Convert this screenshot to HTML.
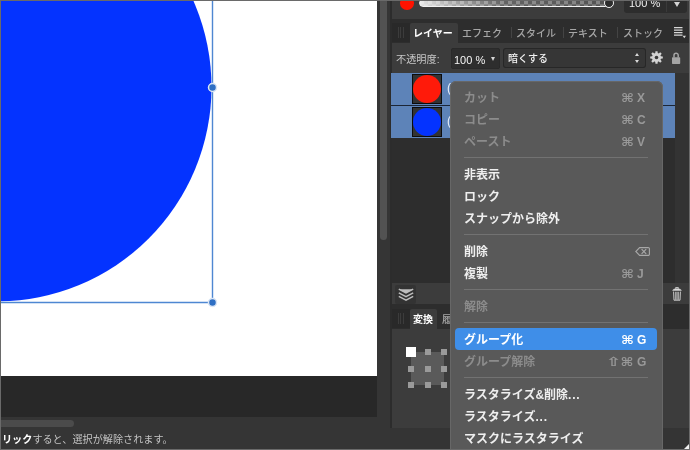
<!DOCTYPE html>
<html lang="ja"><head><meta charset="utf-8">
<style>
*{box-sizing:border-box;margin:0;padding:0}
html,body{width:690px;height:450px;overflow:hidden;background:#383838}
body{position:relative;font-family:"Liberation Sans","Noto Sans CJK JP",sans-serif;font-size:12px;color:#e6e6e6}
.abs{position:absolute}
#root{position:absolute;left:0;top:0;width:690px;height:450px;overflow:hidden}
#root div,#status span{will-change:transform}
#canvas{left:0;top:0;width:377px;height:376px;background:#fff;overflow:hidden}
#below{left:0;top:376px;width:377px;height:41px;background:#282828}
#hscroll{left:0;top:417px;width:390px;height:11px;background:#353535}
#hthumb{left:-6px;top:420px;width:80px;height:7px;border-radius:3.5px;background:#4b4b4b}
#status{left:0;top:428px;width:390px;height:22px;background:#353535}
#status span{position:absolute;left:2px;top:3.6px;font-size:10.15px;color:#c4c4c4;white-space:nowrap;line-height:16px}
#status b{color:#fff;font-weight:700}
#vtrack{left:377px;top:0;width:13px;height:428px;background:#353535}
#vthumb{left:380px;top:-6px;width:7px;height:246px;border-radius:3.5px;background:#525252}
#panel{left:390px;top:0;width:300px;height:450px;background:#383838}
.menu{left:450px;top:81px;width:212.6px;height:380px;background:#595959;border-radius:6px;box-shadow:0 0 0 1px #676767 inset}
.mi{position:absolute;left:14px;margin-top:1px;font-size:12px;font-weight:700;color:#efefef;line-height:22px;height:22px;white-space:nowrap}
.mi.dis{color:#8c8c8c;font-weight:700}
.mi.on,.sc.on{color:#fff}
.sc{position:absolute;margin-top:1px;font-size:12px;font-weight:700;color:#999;line-height:22px;height:22px;white-space:nowrap;font-family:"Liberation Sans","DejaVu Sans",sans-serif}
.sc.mod{right:29px;text-align:right;font-size:14px;margin-top:1px}
.sc.mod b,.sc.mod i{display:inline-block;font-style:normal;transform:scale(1,.85)}
.sc.mod i{font-size:15px;margin-right:1px;font-weight:700;transform:scale(1.25,.85)}
.sc.key{left:187px}
.sep{position:absolute;left:14px;width:184px;height:1px;background:#727272}
.hl{position:absolute;left:5px;width:202px;height:22px;border-radius:4px;background:#3f8ee8}
.del{position:absolute;left:184.5px}
.slider{border-radius:4px;border:1.2px solid #f2f2f2;background:linear-gradient(90deg,rgba(255,255,255,.85) 0%,rgba(255,255,255,.5) 18%,rgba(255,255,255,.1) 45%,rgba(255,255,255,0) 100%),repeating-conic-gradient(#525252 0 25%,#828282 0 50%) 0px .4px/8px 8px}
.tab{top:26px;font-size:10px;line-height:16px;color:#a6a6a6;font-weight:500;white-space:nowrap}
.tab.on{color:#fff;font-weight:700}
.tsep{top:27px;width:1px;height:11px;background:#444}
.box{background:#2e2e2e;border-radius:3px;box-shadow:0 0 0 .5px #262626 inset}
.thumb{width:30px;height:30px;background:#333;border:1px solid #0c0c0c}
.thumb i{position:absolute;left:0;top:0;width:28px;height:28px;border-radius:50%}
.dot{width:6px;height:6px;background:#9a9a9a}
.el{letter-spacing:.8px}
.box2{background:#363636;box-shadow:0 0 0 1px #272727 inset}
</style></head><body><div id="root">
<div id="canvas" class="abs">
<svg width="377" height="377" style="position:absolute;left:0;top:0">
<circle cx="-2.8" cy="87" r="214.3" fill="#0433ff"/>
<line x1="212.5" y1="0" x2="212.5" y2="302" stroke="#4e87d2" stroke-width="1.4"/>
<line x1="0" y1="302.5" x2="212" y2="302.5" stroke="#4e87d2" stroke-width="1.4"/>
<circle cx="212.5" cy="87.5" r="4" fill="#2f6fc4" stroke="#dbe6f5" stroke-width="1.5"/>
<circle cx="212.5" cy="302.5" r="4" fill="#2f6fc4" stroke="#dbe6f5" stroke-width="1.5"/>
</svg>
</div>
<div id="below" class="abs"></div>
<div id="hscroll" class="abs"></div><div id="hthumb" class="abs"></div>
<div id="status" class="abs"><span><b>リック</b>すると、選択が解除されます。</span></div>
<div id="vtrack" class="abs"></div><div id="vthumb" class="abs"></div>
<div id="panel" class="abs">
<!-- colour panel remnant -->
<div class="abs" style="left:0;top:0;width:1.5px;height:450px;background:#2c2c2c"></div>
<div class="abs" style="left:1.5px;top:0;width:298.5px;height:19px;background:#3c3c3c"></div>
<div class="abs" style="left:9.5px;top:-4.5px;width:13.5px;height:13.5px;border-radius:50%;background:#ff1200"></div>
<div class="abs slider" style="left:29px;top:-0.8px;width:190px;height:7.6px"></div>
<div class="abs" style="left:214px;top:-1.8px;width:9.8px;height:9.8px;border-radius:50%;border:1.6px solid #fff;background:#2c2c2c"></div>
<div class="abs" style="left:234px;top:-8px;width:63px;height:20.5px;border-radius:3px;background:#2d2d2d"></div>
<div class="abs" style="left:276px;top:-8px;width:1px;height:20px;background:#3a3a3a"></div>
<div class="abs" style="left:238.5px;top:-4px;font-size:11px;line-height:14px;color:#f2f2f2;white-space:nowrap">100 %</div>
<div class="abs tri" style="left:283.7px;top:1.5px;border-top:5px solid #d4d4d4;border-left:3.3px solid transparent;border-right:3.3px solid transparent"></div>
<!-- tab bar -->
<div class="abs" style="left:1.5px;top:19px;width:298.5px;height:24px;background:#2d2d2d"></div>
<div class="abs grip" style="left:2px;top:23px;width:17.5px;height:19px;background:#292929"></div>
<div class="abs" style="left:7.5px;top:26.5px;width:1px;height:10.5px;background:#3c3c3c"></div>
<div class="abs" style="left:10.0px;top:26.5px;width:1px;height:10.5px;background:#3c3c3c"></div>
<div class="abs" style="left:12.5px;top:26.5px;width:1px;height:10.5px;background:#3c3c3c"></div>
<div class="abs" style="left:19.5px;top:22.5px;width:47.5px;height:21px;background:#3c3c3c;border-radius:2px 2px 0 0"></div>
<div class="abs tab on" style="left:22.5px">レイヤー</div>
<div class="abs tab" style="left:72px">エフェク</div>
<div class="abs tsep" style="left:120.5px"></div>
<div class="abs tab" style="left:126.3px">スタイル</div>
<div class="abs tsep" style="left:173px"></div>
<div class="abs tab" style="left:177.5px">テキスト</div>
<div class="abs tsep" style="left:227px"></div>
<div class="abs tab" style="left:232.5px">ストック</div>
<svg class="abs" style="left:284px;top:27px" width="12" height="12" viewBox="0 0 12 12"><path d="M0 .7h8.5M0 3.2h8.5M0 5.7h8.5M0 8.2h8.5" stroke="#d8d8d8" stroke-width="1.2"/><path d="M8.6 8.8h3.4l-1.7 2.4z" fill="#d8d8d8"/></svg>
<!-- opacity row -->
<div class="abs" style="left:1.5px;top:43px;width:298.5px;height:29.5px;background:#3c3c3c"></div>
<div class="abs" style="left:6px;top:52px;font-size:10.2px;line-height:16px;color:#c8c8c8;white-space:nowrap">不透明度:</div>
<div class="abs box" style="left:61px;top:48px;width:49px;height:20.5px"></div>
<div class="abs" style="left:64px;top:52px;font-size:11px;line-height:16px;color:#f4f4f4;white-space:nowrap">100 %</div>
<div class="abs" style="left:100.8px;top:57px;border-top:4.4px solid #d4d4d4;border-left:2.6px solid transparent;border-right:2.6px solid transparent"></div>
<div class="abs box box2" style="left:112.5px;top:48px;width:143px;height:20px"></div>
<div class="abs" style="left:117.5px;top:51.4px;font-size:10px;line-height:16px;color:#f4f4f4;font-weight:500;white-space:nowrap">暗くする</div>
<div class="abs" style="left:245px;top:52.5px;border-bottom:3.5px solid #d8d8d8;border-left:2.6px solid transparent;border-right:2.6px solid transparent"></div>
<div class="abs" style="left:245px;top:60px;border-top:3.5px solid #d8d8d8;border-left:2.6px solid transparent;border-right:2.6px solid transparent"></div>
<svg class="abs" style="left:259.5px;top:51px" width="13" height="13" viewBox="-6.5 -6.5 13 13"><path d="M-1.27 -4.11 L-1.08 -6.31 L1.08 -6.31 L1.27 -4.11 L2.01 -3.80 L3.69 -5.23 L5.23 -3.69 L3.80 -2.01 L4.11 -1.27 L6.31 -1.08 L6.31 1.08 L4.11 1.27 L3.80 2.01 L5.23 3.69 L3.69 5.23 L2.01 3.80 L1.27 4.11 L1.08 6.31 L-1.08 6.31 L-1.27 4.11 L-2.01 3.80 L-3.69 5.23 L-5.23 3.69 L-3.80 2.01 L-4.11 1.27 L-6.31 1.08 L-6.31 -1.08 L-4.11 -1.27 L-3.80 -2.01 L-5.23 -3.69 L-3.69 -5.23 L-2.01 -3.80Z" fill="#d4d4d4"/><circle r="4.4" fill="#d4d4d4"/><circle r="1.8" fill="#3a3a3a"/></svg>
<svg class="abs" style="left:282px;top:52px" width="9" height="12" viewBox="0 0 9 12"><path d="M2 5.6V3.3a2.1 2.1 0 0 1 4.2 0V5.6" fill="none" stroke="#a4a4a4" stroke-width="1.5"/><rect x="0" y="5.3" width="8.2" height="6.7" rx=".7" fill="#a4a4a4"/></svg>
<!-- layer list -->
<div class="abs" style="left:1.5px;top:72.5px;width:298.5px;height:211px;background:#2d2d2d"></div>
<div class="abs" style="left:285px;top:72.5px;width:15px;height:211px;background:#333"></div>
<div class="abs" style="left:1px;top:72.5px;width:284px;height:65px;background:#5d83b8"></div>
<div class="abs" style="left:1px;top:105px;width:284px;height:1.2px;background:#1c2636"></div>
<div class="abs thumb" style="left:22px;top:74px"><i style="background:#ff1a0a"></i></div>
<div class="abs thumb" style="left:22px;top:107px"><i style="background:#0433ff"></i></div>
<div class="abs" style="left:56.5px;top:80px;font-size:12px;line-height:16px;color:#e8eef8">(</div>
<div class="abs" style="left:56.5px;top:113px;font-size:12px;line-height:16px;color:#e8eef8">(</div>
<!-- layer toolbar -->
<div class="abs" style="left:1.5px;top:283.3px;width:298.5px;height:21.5px;background:#3c3c3c"></div>
<div class="abs" style="left:5px;top:284.5px;width:20.5px;height:19px;background:#333;border-radius:2px"></div>
<svg class="abs" style="left:7.5px;top:287.5px" width="16" height="14" viewBox="0 0 16 14"><g fill="none" stroke="#bdbdbd" stroke-width="1.5" stroke-linejoin="miter"><path d="M.8 1.2L8 5 15.2 1.2"/><path d="M.8 4.8L8 8.6 15.2 4.8"/><path d="M.8 8.4L8 12.2 15.2 8.4"/></g><path d="M.8 1.2L8 5 15.2 1.2Z" fill="#bdbdbd"/></svg>
<svg class="abs" style="left:281.5px;top:286.5px" width="10" height="14" viewBox="0 0 10 14"><g fill="none" stroke="#dadada" stroke-width=".9"><path d="M3.6 1.6V.6h2.8v1"/><path d="M.6 3.4C1 2.2 2.6 1.7 5 1.7s4 .5 4.4 1.7z" fill="#dadada" stroke-width=".5"/><path d="M1.6 4.6l.4 8.6h6l.4-8.6"/><path d="M3.7 4.8v8M5 4.8v8M6.3 4.8v8" stroke-width=".8"/></g></svg>
<!-- transform tab bar -->
<div class="abs" style="left:1.5px;top:304px;width:298.5px;height:25px;background:#2d2d2d"></div>
<div class="abs grip" style="left:2px;top:309px;width:17.5px;height:19px;background:#292929"></div>
<div class="abs" style="left:7.5px;top:312.5px;width:1px;height:10.5px;background:#3c3c3c"></div>
<div class="abs" style="left:10.0px;top:312.5px;width:1px;height:10.5px;background:#3c3c3c"></div>
<div class="abs" style="left:12.5px;top:312.5px;width:1px;height:10.5px;background:#3c3c3c"></div>
<div class="abs" style="left:19.5px;top:308.5px;width:27px;height:21px;background:#3c3c3c;border-radius:2px 2px 0 0"></div>
<div class="abs tab on" style="left:23px;top:312px">変換</div>
<div class="abs tab" style="left:52px;top:312px">履</div>
<!-- transform content -->
<div class="abs" style="left:1.5px;top:329px;width:298.5px;height:121px;background:#3c3c3c"></div>
<div class="abs" style="left:0;top:428px;width:300px;height:22px;background:#343434"></div>
<svg class="abs" style="left:294px;top:444px" width="5" height="5"><path d="M5 0V5H0Z" fill="#f0f0f0"/></svg>
<div class="abs" style="left:21px;top:352px;width:33px;height:33px;background:#5a5a5a"></div>
<div class="abs" style="left:16px;top:347px;width:10px;height:10px;background:#fff"></div>
<div class="abs dot" style="left:34.5px;top:349px"></div>
<div class="abs dot" style="left:51px;top:349px"></div>
<div class="abs dot" style="left:18px;top:365.5px"></div>
<div class="abs dot" style="left:34.5px;top:365.5px"></div>
<div class="abs dot" style="left:51px;top:365.5px"></div>
<div class="abs dot" style="left:18px;top:382px"></div>
<div class="abs dot" style="left:34.5px;top:382px"></div>
<div class="abs dot" style="left:51px;top:382px"></div>
</div>
<div class="menu abs">
<div class="mi dis" style="top:5px">カット</div>
<div class="sc mod" style="top:5px"><b>⌘</b></div><div class="sc key" style="top:5px">X</div>
<div class="mi dis" style="top:27px">コピー</div>
<div class="sc mod" style="top:27px"><b>⌘</b></div><div class="sc key" style="top:27px">C</div>
<div class="mi dis" style="top:49px">ペースト</div>
<div class="sc mod" style="top:49px"><b>⌘</b></div><div class="sc key" style="top:49px">V</div>
<div class="sep" style="top:76px"></div>
<div class="mi" style="top:82px">非表示</div>
<div class="mi" style="top:104px">ロック</div>
<div class="mi" style="top:126px">スナップから除外</div>
<div class="sep" style="top:153px"></div>
<div class="mi" style="top:159px">削除</div>
<svg class="del" style="top:166px" width="15" height="9" viewBox="0 0 15 9"><path d="M4.6 .6H13.2a1.2 1.2 0 0 1 1.2 1.2v5.4a1.2 1.2 0 0 1 -1.2 1.2H4.6L.8 4.5Z" fill="none" stroke="#a8a8a8" stroke-width="1.1"/><path d="M6.6 2.2l4.6 4.6M11.2 2.2L6.6 6.8" stroke="#a8a8a8" stroke-width="1.2"/></svg>
<div class="mi" style="top:181px">複製</div>
<div class="sc mod" style="top:181px"><b>⌘</b></div><div class="sc key" style="top:181px">J</div>
<div class="sep" style="top:208px"></div>
<div class="mi dis" style="top:214px">解除</div>
<div class="sep" style="top:241px"></div>
<div class="hl" style="top:247px"></div>
<div class="mi on" style="top:247px">グループ化</div>
<div class="sc on mod" style="top:247px"><b>⌘</b></div><div class="sc on key" style="top:247px">G</div>
<div class="mi dis" style="top:269px">グループ解除</div>
<div class="sc mod" style="top:269px"><i>⇧</i><b>⌘</b></div><div class="sc key" style="top:269px">G</div>
<div class="sep" style="top:296px"></div>
<div class="mi" style="top:302px">ラスタライズ&amp;削除<span class="el">...</span></div>
<div class="mi" style="top:324px">ラスタライズ<span class="el">...</span></div>
<div class="mi" style="top:346px">マスクにラスタライズ</div>
</div>
<div class="abs" style="left:0;top:0;width:690px;height:450px;border:1px solid #6a6a6a;pointer-events:none"></div>
</div></body></html>
